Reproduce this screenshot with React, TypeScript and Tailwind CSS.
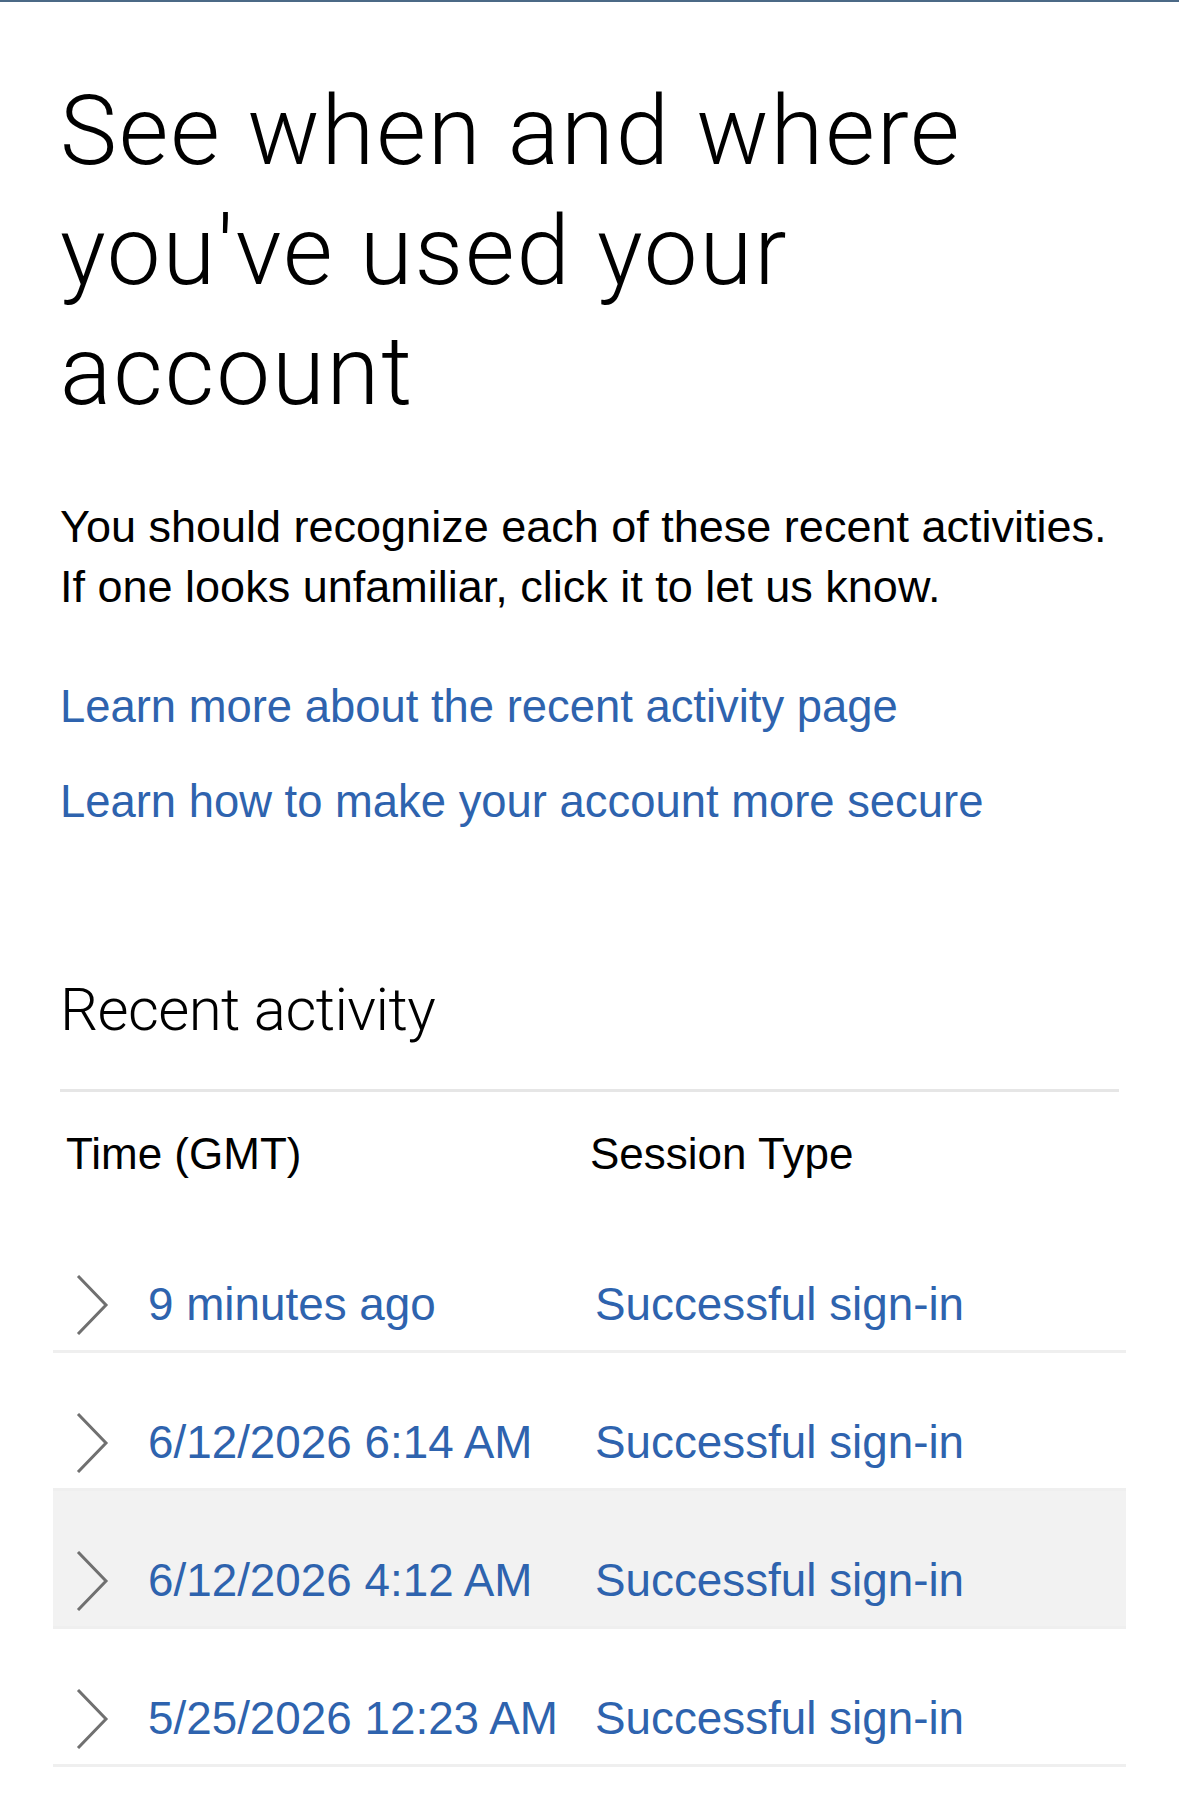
import React from "react";

const rows = [
  { time: "9 minutes ago", type: "Successful sign-in", active: false },
  { time: "6/12/2026 6:14 AM", type: "Successful sign-in", active: false },
  { time: "6/12/2026 4:12 AM", type: "Successful sign-in", active: true },
  { time: "5/25/2026 12:23 AM", type: "Successful sign-in", active: false },
];

const Chevron = () => (
  <svg width="34" height="60" viewBox="0 0 34 60" fill="none" className="shrink-0">
    <path d="M3 1 L31 30 L3 59" stroke="#707070" strokeWidth="3" />
  </svg>
);

const App = () => {
  return (
    <div className="min-h-screen w-full bg-white border-t-2 border-[#4b6986] font-['Liberation_Sans',Arial,sans-serif] text-black">
      <div className="px-[60px] pt-[69px]">
        <h1 className="max-w-[960px] text-[96px] leading-[120px] font-light font-['Roboto',sans-serif] tracking-[1.9px]">
          See when and where you've used your account
        </h1>
        <p className="mt-[66px] text-[45px] leading-[60px]">
          You should recognize each of these recent activities.
          <br />
          If one looks unfamiliar, click it to let us know.
        </p>
        <div className="mt-[60px] flex flex-col gap-[35px] text-[45.4px] leading-[60px] text-[#2e63ae]">
          <a href="#">Learn more about the recent activity page</a>
          <a href="#">Learn how to make your account more secure</a>
        </div>
        <h2 className="mt-[142px] pb-[43px] border-b-[3px] border-[#e6e6e6] text-[60px] leading-[72px] font-light font-['Roboto',sans-serif] tracking-[-0.6px]">
          Recent activity
        </h2>
      </div>

      <div className="px-[53px]">
        <div className="flex pl-[13px] pt-[32px] pb-[31px] text-[44px] leading-[60px]">
          <div className="w-[524px]">Time (GMT)</div>
          <div>Session Type</div>
        </div>
        {rows.map((r) => (
          <div
            key={r.time}
            className={
              r.active
                ? "flex items-center pl-[22px] pt-[60px] pb-[15px] border-b-[3px] border-[#efefef] bg-[#f2f2f2]"
                : "flex items-center pl-[22px] pt-[60px] pb-[15px] border-b-[3px] border-[#efefef]"
            }
          >
            <Chevron />
            <div className="ml-[39px] w-[447px] text-[45.8px] leading-[60px] text-[#2e63ae] whitespace-nowrap">
              {r.time}
            </div>
            <div className="text-[45.8px] leading-[60px] text-[#2e63ae]">{r.type}</div>
          </div>
        ))}
      </div>
    </div>
  );
};

export default App;
